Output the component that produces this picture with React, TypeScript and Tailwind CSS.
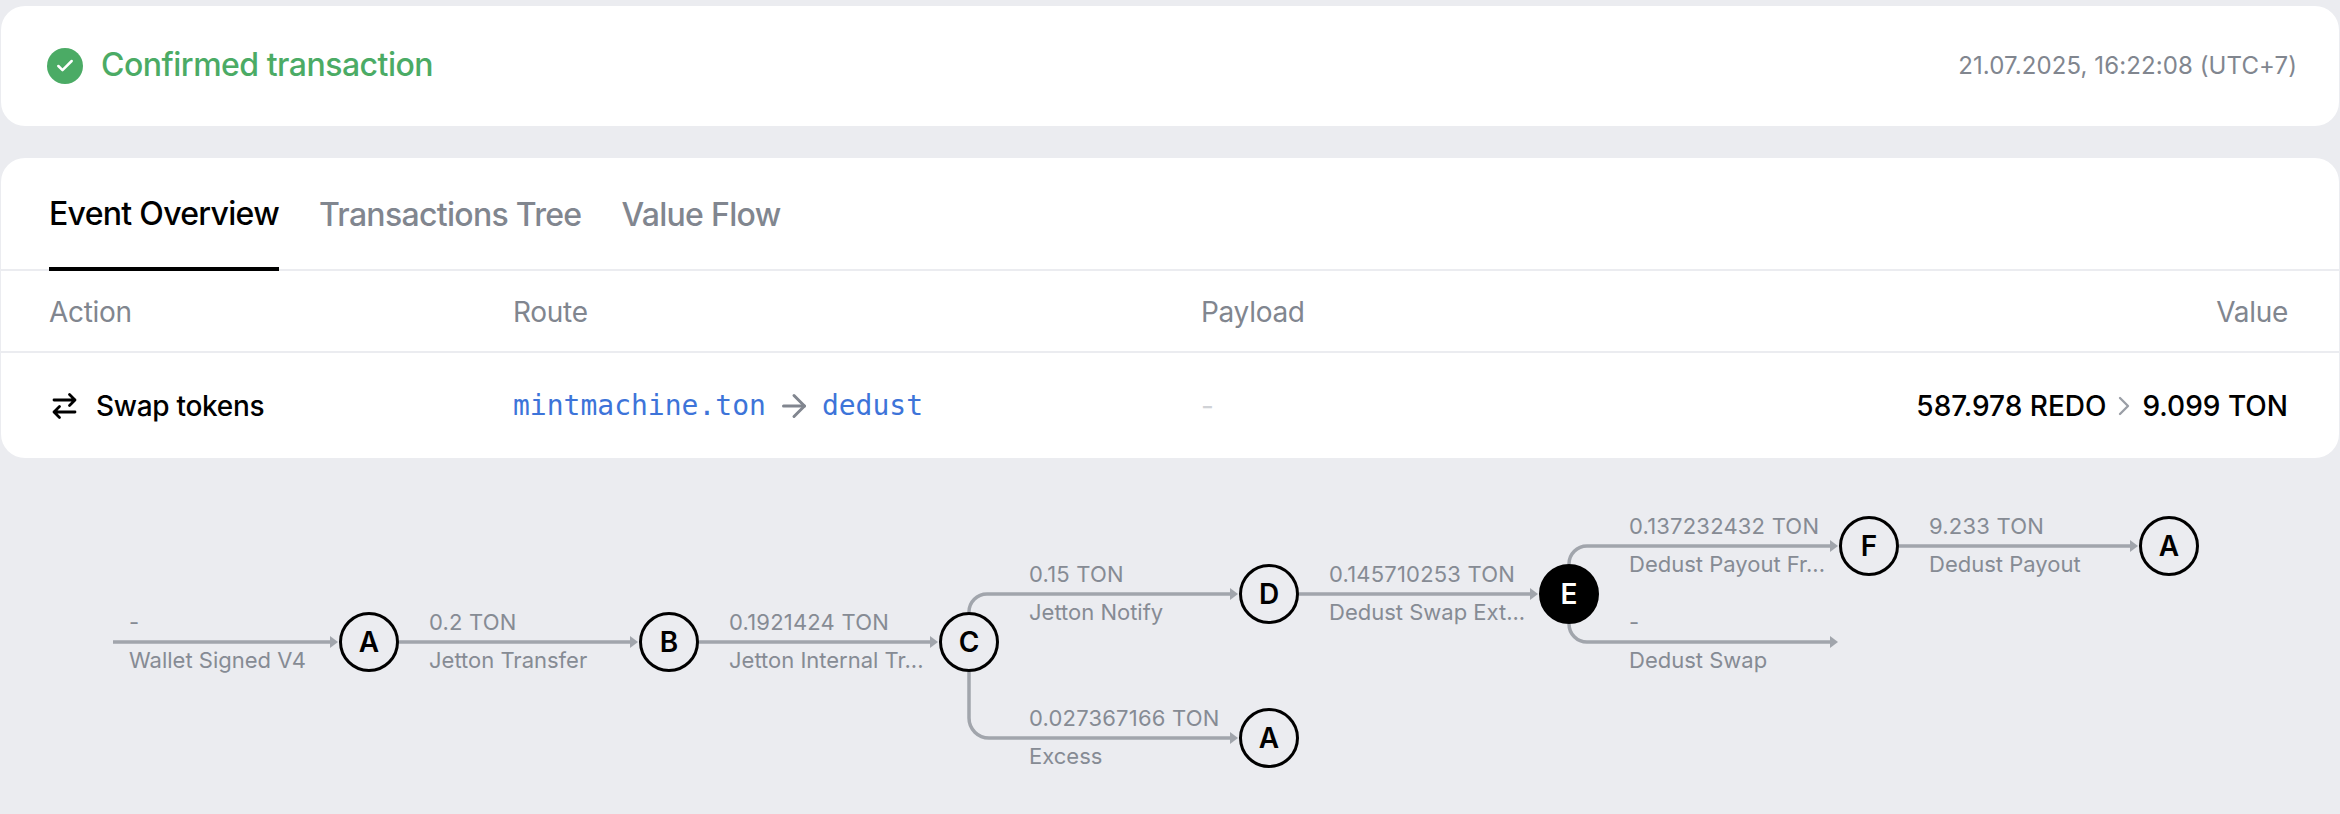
import { ArrowRight, Check, ChevronRight } from "lucide-react"

// graph coordinates are relative to the canvas below the cards
const CANVAS_TOP = 458

const nodes = [
    { letter: "A", x: 369, y: 642 },
    { letter: "B", x: 669, y: 642 },
    { letter: "C", x: 969, y: 642 },
    { letter: "D", x: 1269, y: 594 },
    { letter: "E", x: 1569, y: 594, active: true },
    { letter: "A", x: 1269, y: 738 },
    { letter: "F", x: 1869, y: 546 },
    { letter: "A", x: 2169, y: 546 },
]

const edges = [
    { d: "M113 642H333", tip: [338, 642], top: "-", bottom: "Wallet Signed V4", x: 129, y: 642 },
    { d: "M399 642H633", tip: [638, 642], top: "0.2 TON", bottom: "Jetton Transfer", x: 429, y: 642 },
    { d: "M699 642H933", tip: [938, 642], top: "0.1921424 TON", bottom: "Jetton Internal Tr...", x: 729, y: 642 },
    { d: "M969 612A18 18 0 0 1 987 594H1233", tip: [1238, 594], top: "0.15 TON", bottom: "Jetton Notify", x: 1029, y: 594 },
    { d: "M969 672V718A20 20 0 0 0 989 738H1233", tip: [1238, 738], top: "0.027367166 TON", bottom: "Excess", x: 1029, y: 738 },
    { d: "M1299 594H1533", tip: [1538, 594], top: "0.145710253 TON", bottom: "Dedust Swap Ext...", x: 1329, y: 594 },
    { d: "M1569 564A18 18 0 0 1 1587 546H1833", tip: [1838, 546], top: "0.137232432 TON", bottom: "Dedust Payout Fr...", x: 1629, y: 546 },
    { d: "M1569 624A18 18 0 0 0 1587 642H1833", tip: [1838, 642], top: "-", bottom: "Dedust Swap", x: 1629, y: 642 },
    { d: "M1899 546H2133", tip: [2138, 546], top: "9.233 TON", bottom: "Dedust Payout", x: 1929, y: 546 },
]

function SwapIcon() {
    return (
        <svg width="28" height="28" viewBox="0 0 28 28" fill="none" stroke="#000" strokeWidth="2.8" strokeLinecap="round" strokeLinejoin="round">
            <path d="M5 8H26M20.5 2.5L26 8L20.5 13.5" />
            <path d="M26 20H5M10.5 14.5L5 20L10.5 25.5" />
        </svg>
    )
}

function Graph() {
    return (
        <div className="relative h-[356px] w-full">
            <svg className="absolute inset-0 h-full w-full" fill="none" stroke="#a1a5ac" strokeWidth="3.5">
                {edges.map((edge) => (
                    <g key={edge.d} transform={`translate(0 ${-CANVAS_TOP})`}>
                        <path d={edge.d} />
                        <path
                            d={`M${edge.tip[0] - 8} ${edge.tip[1] - 6}L${edge.tip[0]} ${edge.tip[1]}L${edge.tip[0] - 8} ${edge.tip[1] + 6}Z`}
                            fill="#a1a5ac"
                            stroke="none"
                        />
                    </g>
                ))}
            </svg>
            {edges.map((edge) => (
                <div key={edge.bottom} className="absolute text-[22px] leading-[30px] whitespace-nowrap text-[#868b94]" style={{ left: edge.x, top: edge.y - CANVAS_TOP - 35 }}>
                    <div className="tracking-[0.2px]">{edge.top}</div>
                    <div className="mt-[8px]">{edge.bottom}</div>
                </div>
            ))}
            {nodes.map((node) => (
                <div
                    key={`${node.letter}${node.x}`}
                    className={`absolute flex h-[60px] w-[60px] items-center justify-center rounded-full border-[3px] border-black text-[28px] font-semibold ${node.active ? "bg-black text-white" : "bg-[#ebecf0] text-black"}`}
                    style={{ left: node.x - 30, top: node.y - CANVAS_TOP - 30 }}
                >
                    {node.letter}
                </div>
            ))}
        </div>
    )
}

export default function App() {
    return (
        <div className="h-[814px] overflow-hidden bg-[#ebecf0] pt-[6px] font-['Inter',sans-serif]">
            <div className="mx-[1px] flex h-[120px] items-center justify-between rounded-3xl bg-white pr-[42px] pl-[46px]">
                <div className="flex items-center gap-[18px]">
                    <span className="flex h-9 w-9 items-center justify-center rounded-full bg-[#4bab65]">
                        <Check className="h-5 w-5 text-white" strokeWidth={3} />
                    </span>
                    <span className="-mt-[2px] text-[32px] font-medium tracking-[-0.5px] text-[#4bab65]">Confirmed transaction</span>
                </div>
                <span className="text-2xl tracking-[0.1px] text-[#81868f]">21.07.2025, 16:22:08 (UTC+7)</span>
            </div>

            <div className="mx-[1px] mt-8 rounded-3xl bg-white">
                <div className="flex h-[113px] gap-10 border-b-2 border-[#ebecf0] px-12 text-[32px] font-medium tracking-[-0.7px]">
                    <div className="-mb-[2px] flex items-center border-b-4 border-black pt-[3px] text-black">Event Overview</div>
                    <div className="flex items-center pt-[3px] text-[#81868f]">Transactions Tree</div>
                    <div className="flex items-center pt-[3px] text-[#81868f]">Value Flow</div>
                </div>
                <div className="grid h-[82px] grid-cols-[464px_688px_1fr_auto] items-center border-b-2 border-[#ebecf0] pt-[1px] pr-[51px] pl-12 text-[28px] tracking-[-0.3px] text-[#81868f]">
                    <span>Action</span>
                    <span>Route</span>
                    <span>Payload</span>
                    <span>Value</span>
                </div>
                <div className="grid h-[105px] grid-cols-[464px_688px_1fr_auto] items-center pr-[51px] pl-12 text-[28px]">
                    <div className="flex items-center gap-[19px] font-medium tracking-[-0.3px] text-black">
                        <SwapIcon />
                        <span>Swap tokens</span>
                    </div>
                    <div className="flex items-center gap-[10px] font-['DejaVu_Sans_Mono',monospace] text-[#3d74d9]">
                        <span>mintmachine.ton</span>
                        <ArrowRight className="h-9 w-9 text-[#81868f]" strokeWidth={2} />
                        <span>dedust</span>
                    </div>
                    <span className="text-[#d0d2d6]">-</span>
                    <div className="flex items-center gap-[2px] font-medium text-black">
                        <span>587.978 REDO</span>
                        <ChevronRight className="h-8 w-8 text-[#9a9ea6]" strokeWidth={1.75} />
                        <span>9.099 TON</span>
                    </div>
                </div>
            </div>

            <Graph />
        </div>
    )
}
